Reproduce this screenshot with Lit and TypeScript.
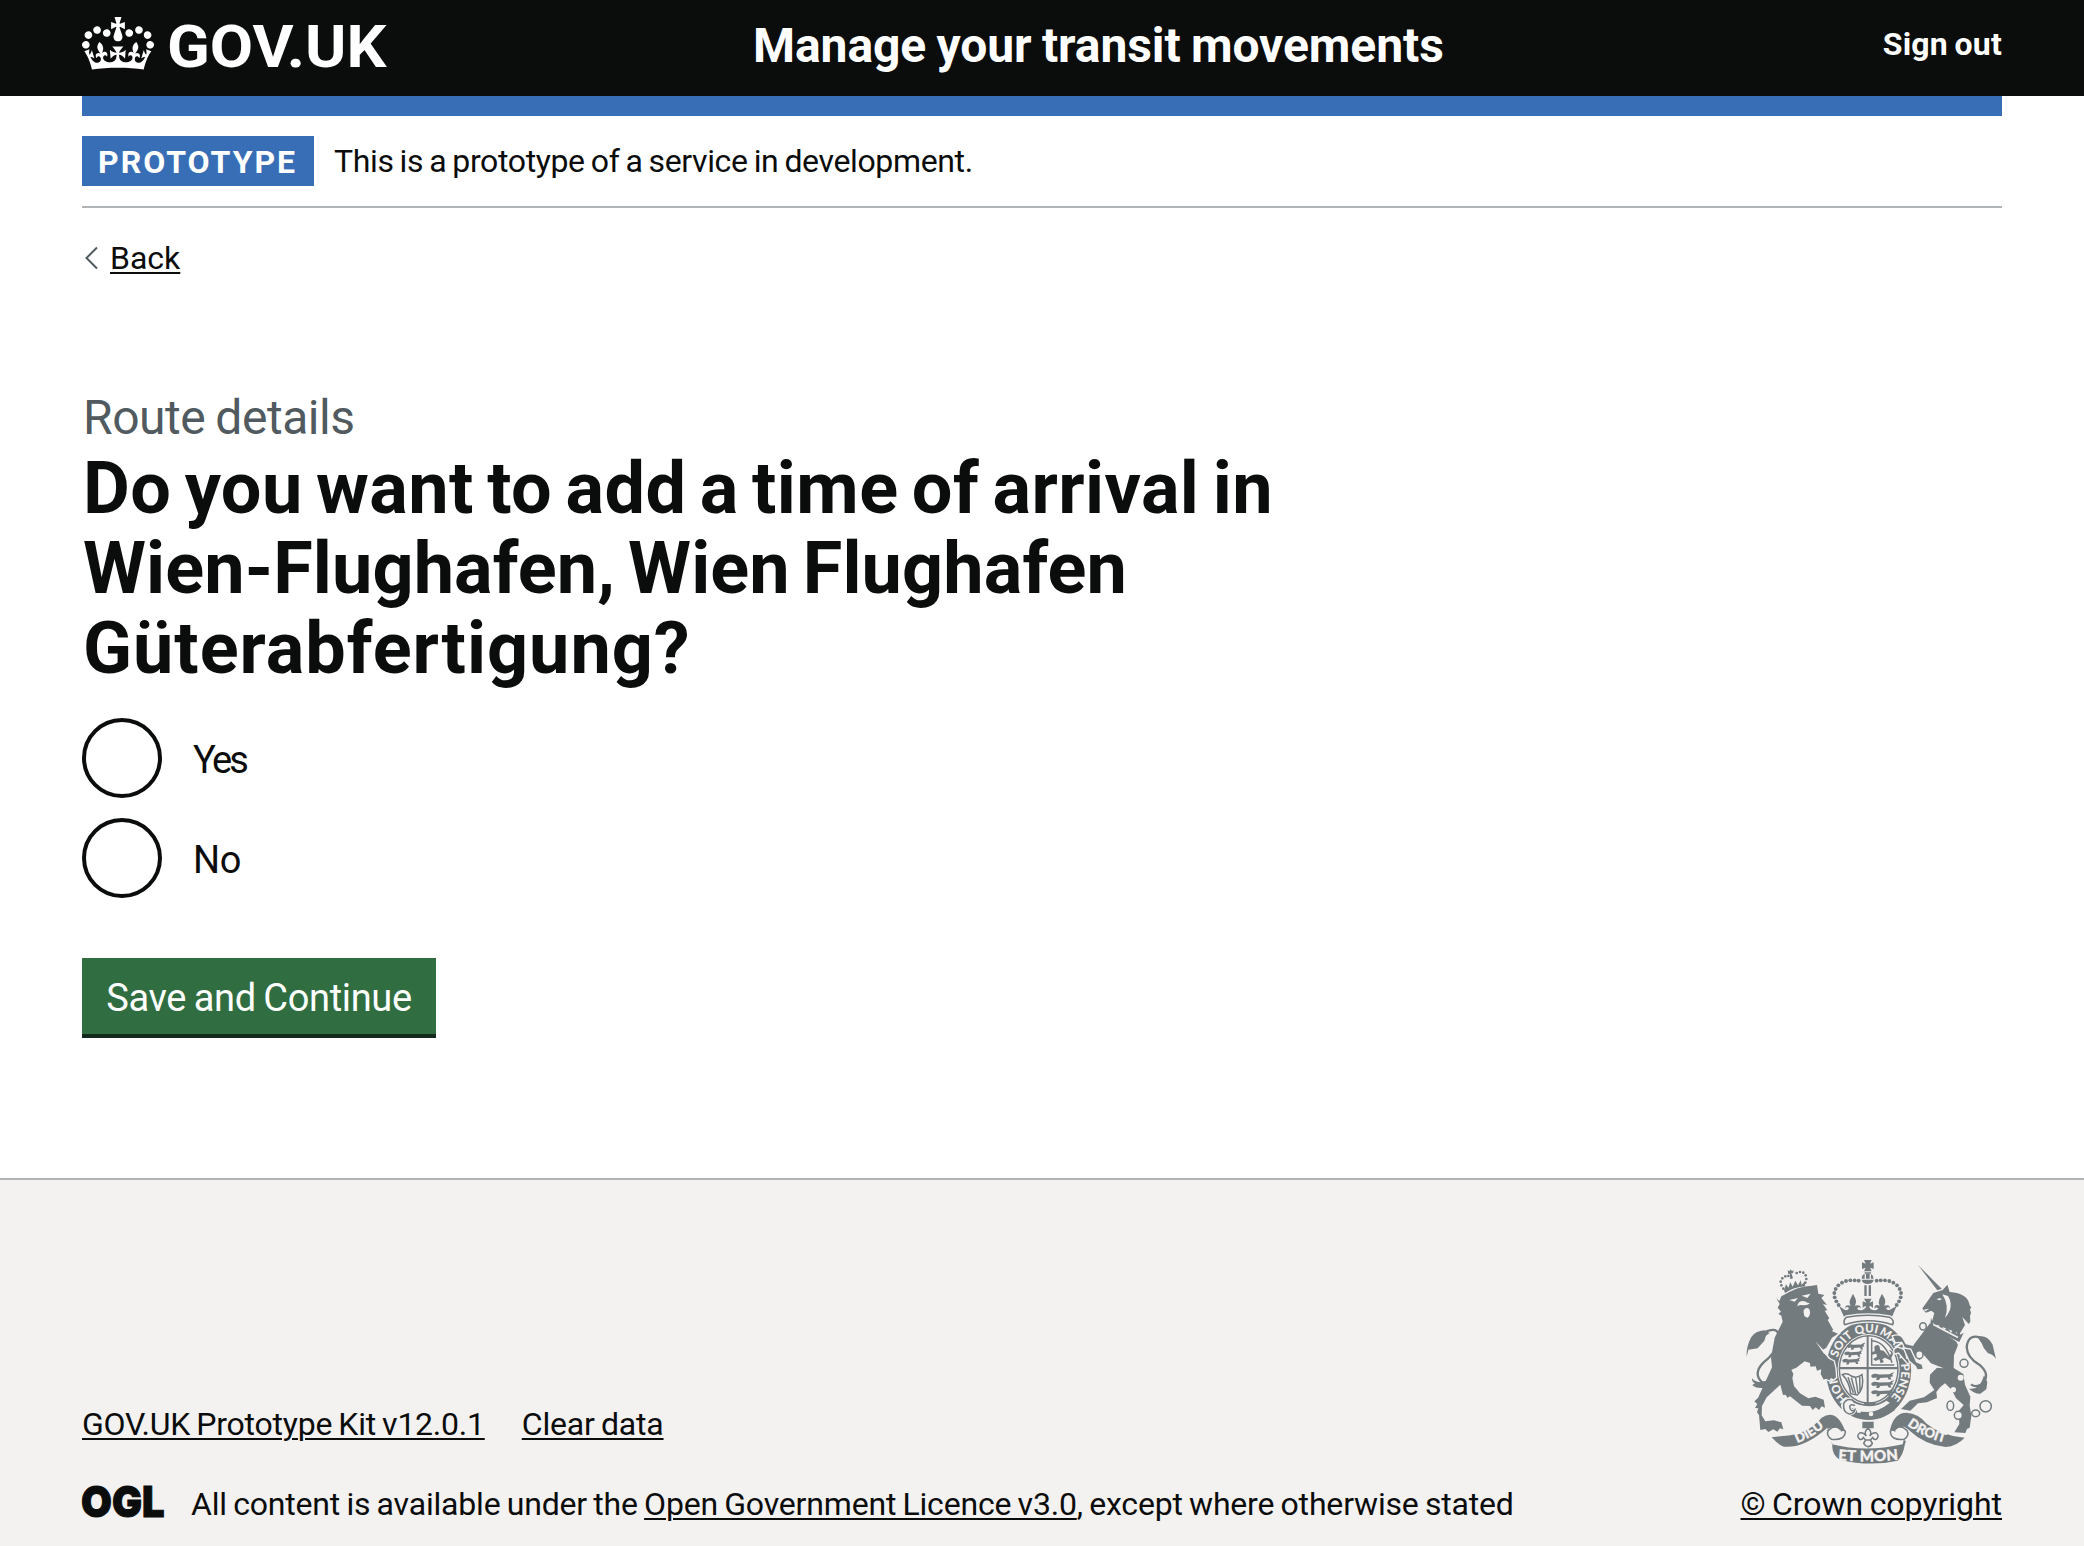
import { LitElement, html, svg, css } from "lit";
import { customElement, state } from "lit/decorators.js";

const CROWN =
  "M25 30.2c3.5 1.5 7.7-.2 9.1-3.7 1.5-3.6-.2-7.8-3.9-9.2-3.6-1.4-7.6.3-9.1 3.9-1.4 3.5.3 7.5 3.9 9zM9 39.5c3.6 1.5 7.8-.2 9.2-3.7 1.5-3.6-.2-7.8-3.9-9.1-3.6-1.5-7.6.2-9.1 3.8-1.4 3.5.3 7.5 3.8 9zM4.4 57.2c3.5 1.5 7.7-.2 9.1-3.8 1.5-3.6-.2-7.7-3.9-9.1-3.5-1.5-7.6.3-9.1 3.8-1.4 3.5.3 7.6 3.9 9.1zm38.3-21.4c3.5 1.5 7.7-.2 9.1-3.8 1.5-3.6-.2-7.7-3.9-9.1-3.6-1.5-7.6.3-9.1 3.8-1.3 3.6.4 7.7 3.9 9.1zm64.4-5.6c-3.6 1.5-7.8-.2-9.1-3.7-1.5-3.6.2-7.8 3.8-9.2 3.6-1.4 7.7.3 9.2 3.9 1.3 3.5-.4 7.5-3.9 9zm15.9 9.3c-3.6 1.5-7.7-.2-9.1-3.7-1.5-3.6.2-7.8 3.7-9.1 3.6-1.5 7.7.2 9.2 3.8 1.5 3.5-.3 7.5-3.8 9zm4.7 17.7c-3.6 1.5-7.8-.2-9.2-3.8-1.5-3.6.2-7.7 3.9-9.1 3.6-1.5 7.7.3 9.2 3.8 1.3 3.5-.4 7.6-3.9 9.1zM89.3 35.8c-3.6 1.5-7.8-.2-9.2-3.8-1.4-3.6.2-7.7 3.9-9.1 3.6-1.5 7.7.3 9.2 3.8 1.4 3.6-.3 7.7-3.9 9.1zM69.7 17.7l8.9 4.7V9.3l-8.9 2.8c-.2-.3-.5-.6-.9-.9L72.4 0H59.6l3.5 11.2c-.3.3-.6.5-.9.9l-8.8-2.8v13.1l8.8-4.7c.3.3.6.7.9.9l-5 15.4v.1c-.2.8-.4 1.6-.4 2.4 0 4.1 3.1 7.5 7 8.1h.2c.3 0 .7.1 1 .1.4 0 .7 0 1-.1h.2c4-.6 7.1-4.1 7.1-8.1 0-.8-.1-1.7-.4-2.4V34l-5.1-15.4c.4-.2.7-.6 1-.9zM66 92.8c16.9 0 32.8 1.1 47.1 3.2 4-16.9 8.9-26.7 14-33.5l-9.6-3.4c1 4.9 1.1 7.2 0 10.2-1.5-1.4-3-4.3-4.2-8.7L108.6 76c2.8-2 5-3.2 7.5-3.3-4.4 9.4-10 11.9-13.6 11.2-4.3-.8-6.3-4.6-5.6-7.9 1-4.7 5.7-5.9 8-.5 4.3-8.7-3-11.4-7.6-8.8 7.1-7.2 7.9-13.5 2.1-21.1-8 6.1-8.1 12.3-4.5 20.8-4.7-5.4-12.1-2.5-9.5 6.2 3.4-5.2 7.9-2 7.2 3.1-.6 4.3-6.4 7.8-13.5 7.2-10.3-.9-10.9-8-11.2-13.8 2.5-.5 7.1 1.8 11 7.3L80.2 60c-4.1 4.4-8 5.3-12.3 5.4 1.4-4.4 8-11.6 8-11.6H55.5s6.4 7.2 7.9 11.6c-4.2-.1-8-1-12.3-5.4l1.4 16.4c3.9-5.5 8.5-7.7 10.9-7.3-.3 5.8-.9 12.8-11.1 13.8-7.2.6-12.9-2.9-13.5-7.2-.7-5 3.8-8.3 7.1-3.1 2.7-8.7-4.6-11.6-9.4-6.2 3.7-8.5 3.6-14.7-4.6-20.8-5.8 7.6-5 13.9 2.2 21.1-4.7-2.6-11.9.1-7.7 8.8 2.3-5.5 7.1-4.2 8.1.5.7 3.3-1.3 7.1-5.7 7.9-3.5.7-9-1.8-13.5-11.2 2.5.1 4.7 1.3 7.5 3.3l-4.7-15.4c-1.2 4.4-2.7 7.2-4.3 8.7-1.1-3-.9-5.3 0-10.2l-9.5 3.4c5 6.9 9.9 16.7 14 33.5 14.8-2.1 30.8-3.2 47.7-3.2z";

// Pearls along the left arch of the royal crown; the right arch mirrors them.
const PEARLS = [[416,122],[404,121],[391,121],[378,123],[366,128],[355,136],[347,147],[343,159],[344,172],[349,184],[356,195]];
const SMALL_PEARLS = [[190,146],[184,136],[182,125],[187,115],[196,109],[205,108],[230,99],[240,96],[250,98],[257,106],[259,117],[256,128]];
const PASSANT = "M0 4c5-4 9-3 13-1l18-1c4-2 5-5 9-4l-4 5 2 4-5 2 2 6h-5l-2-5-13 1-2 5h-5l1-6-7 1-3-4z";

const arms = svg`
  <defs>
    <path id="garter-line" d="M446 501A98 112 0 0 1 446 277A98 112 0 0 1 446 501" />
    <path id="left-line" d="M214 615Q278 596 326 548" />
    <path id="right-line" d="M548 546Q606 594 690 612" />
    <path id="mid-line" d="M350 660Q443 669 540 659" />
  </defs>
  <g class="ink">
    <path d="M432 60h23l-5 11 11-4v20l-11-4 5 11h-23l5-11-11 4V67l11 4z" />
    <path d="M434 97h19v4h-19zM425 116q1-13 9-14v14zM438 102h11v14h-11zM453 102q7 3 8 14h-8zM425 119h36q-3 13-18 13t-18-13z" />
    ${PEARLS.map(([x, y]) => svg`<circle cx=${x} cy=${y} r="5.8" /><circle cx=${886 - x} cy=${y} r="5.8" />`)}
    <path d="M433 136h7v32h-7zM446 136h7v32h-7z" />
    <path d="M357 198l18 12q9 2 12-5-8-8-12 1 0-14 17-9-6-9-1-19l8-17 8 17q4 10-2 19 17-5 18 9-4-8-12-1 4 9 18 4 9-3 10-11-9 1-11 6v-20l11 4-7-12h23l-7 12 11-4v20q-4-6-11-6 0 11 11 12 12 3 16-5-7-6-12 1 0-15 16-9-5-8-1-19l8-17 9 17q3 10-2 19 17-5 17 9-4-8-12-1 4 8 12 4l20-11-17 39q-63-14-138 0z" />
    <ellipse cx="445.500" cy="391" rx="128" ry="149" />
  </g>
  <path class="line halo" d="M379 232q65-13 130 0 15 8 9 22-72-24-144 0-6-13 5-22z" />
  <path class="paper" d="M379 233q65-13 130 0 16 9 10 22-74-27-145 0-7-14 5-22z" />
  <path class="line" d="M379 232q65-13 130 0 15 8 9 22-72-24-144 0-6-13 5-22z" />
  <ellipse class="paper" cx="446" cy="388" rx="93" ry="106" />
  <ellipse class="line" cx="446" cy="388" rx="88" ry="101" />
  <path class="ink" d="M440 288h6v93h88v7h-88v104h-6V388h-83v-7h83z" />
  <g class="ink">
    ${[[382, 311], [374, 333], [368, 355]].map(([x, y]) => svg`<path transform="translate(${x} ${y}) scale(1.35 1.15)" d=${PASSANT} />`)}
    ${[[455, 400], [455, 424], [455, 449]].map(([x, y]) => svg`<path transform="translate(${x} ${y}) scale(1.7 1.25)" d=${PASSANT} />`)}
    <path d="M463 320q7-9 15-2l3 13q10-1 14 6l12 13 7-11-7-9q9 0 12 12l-8 19-16-8-8 5 5 8-10 4-4-12-11 5-8-6 12-7-2-9-12 3-5-7 12-3z" />
    <path d="M432 488h35v7h-35zM427 545h34v20h-34z" />
  </g>
  <path class="line" d="M455 295v80h68M455 302q42 2 61 66M367 404q13-7 27 4 16 9 32-4 8 42-14 61l-20-4q-4-37-25-57zM384 412l16 46M394 413l13 49M407 414l7 45M419 411l1 42" />
  <g class="motto">
    <text><textPath href="#garter-line" startOffset="17.500%">HONI</textPath></text>
    <text><textPath href="#garter-line" startOffset="36.500%">SOIT</textPath></text>
    <text><textPath href="#garter-line" startOffset="49%">QUI</textPath></text>
    <text><textPath href="#garter-line" startOffset="60.500%">MAL</textPath></text>
    <text><textPath href="#garter-line" startOffset="69.500%">Y</textPath></text>
    <text><textPath href="#garter-line" startOffset="80.500%">PENSE</textPath></text>
  </g>
  <path class="paper" d="M385 480q62 36 115 2l10 7q-60 53-130 14z" />
  <path class="ink" d="M380 494q65 46 128-4l17 20q-70 52-148 7z" />
  <g class="paper"><circle cx="417" cy="512" r="7" /><circle cx="453" cy="522" r="7" /></g>
  <path class="gap" d="M394 478q-23-3-26 18 2 22 20 26 14-1 17-13-14 9-16-10 3-9 16-2" />
  <path class="line" d="M400 482q-20-10-29 9-3 27 17 31 14-1 17-13-14 9-16-10 3-9 16-2" />

  <!-- Lion -->
  <path class="outlined" d="M178 183l6-14q54-32 86-31l21-3 4 26 18 4-9 9 17 21-12-3 13 19-8 1 14 23-5 5 17 30-5 3 19 8-18 12-17 30-12 8 19 25 15 8 5 21 2 27-7 6-8-4-5 7-10-5-7 3-9-17 2-14-13 4-4-13-16 1-1-11-16-5-29 22-8 28 5 24 18 22 25 15 21-5 25 9 4 24-10-4-8 11-10-8-9 8-8-12-24-1-36-28-8 4-5-9-8 1-8-31-41 38-14 26-1 28 11 18 26-3 22 6 6 21-10-3-8 10-12-7-15 8-9-9-15 3-4-45-6-8 4-12-10-1 7-12-9-8 11-10 18-40 24-52-3-29 11-60 24-48-4-18-9-6 8-6-10-12 6-11-10-17z" />
  <path class="paper" d="M208 180l26-6-10 11zM245 167l27-6-10 13zM237 187q13-8 25 1l8 2-8 4-9 2-11-1-11 3zM251 211q8-13 17-3 6 16-5 25-14 0-12-22z" />
  <path class="paper" d="M286 304l28 30 17 21-20-15zM214 390q12-9 26-5-14 7-16 24z" />
  <path class="ink" d="M192 151l6-18 7 10 6-16 7 13 8-18 8 14 8-15 3 13 9-9 2 14q-34 2-61 20zM203 91l6 3 2-6 5 5 5-2-2 9-5-1 5 16-8 3-2-17-4 2z" />
  ${SMALL_PEARLS.map(([x, y]) => svg`<circle class="ink" cx=${x} cy=${y} r="4" />`)}
  <path class="line thick" d="M137 275q47-19 39 31-11 35-46 62-33 34-2 60 21 3 34-15" />
  <path class="ink" d="M80 350q-2-30 14-59 12-18 39-20l16 8-11 8-5 15-20 23-28 4zM127 425q-18 5-31-10-1 11 9 15l-8 5q8 10 30 9 27-1 38-29z" />

  <!-- Unicorn -->
  <path class="ink" d="M594 75l77 77-11 9z" />
  <path class="outlined" d="M607 205l9-12 24-34 28-9 14-16 7 22q55 4 60 40l5 7-4 4 3 13-3 7 1 18-5 7-19-21 8 24-16 26-84-33 8-29-9-7-16 6-6-6z" />
  <path class="paper" d="M650 178q9-7 16 0-8 5-16 0zM667 163l17 5q20 32-9 66 14-37-8-71zM611 209l17-3-12 8z" />
  <path class="outlined" d="M630 250l79 55 5 10-12 31-1 38 29 18 5 32 16 36-2 27 5 30-5 36-8 4-5 12-33-2 15-25-2-39 15-18-23-20-13-26-20-19q-18 12-26 26l2 18-30 13-27 3-23 22-28-5 26-25 43-10 31-22-14-22 1-24 21-21 20 2-38-15-26-30-7 20-17-9-19 19-28-33-11 3q-7-14 9-17l19 8 6 26 18-7-23-29-7-16-20 1-8-17q21-8 31 11l7 13 22 5 6-9z" />
  <path class="outlined" d="M553 326l16 36 18 15 6 11 15-2-3-12-17-7-17-38z" />
  <path class="ink" d="M633 233l-3 30 88 43 13-28-10 6-4-12-7 9-9-13-8 10-11-16-10 9-8-17-10 8-8-16-6 8z" />
  <path class="paper" d="M641 251l74 39-2 5-74-39z" />
  <g class="chain">
    <ellipse cx="609" cy="259" rx="10" ry="11" /><ellipse cx="598" cy="344" rx="11" ry="12" />
    <circle cx="732" cy="370" r="12" /><ellipse cx="691" cy="497" rx="10" ry="14" />
    <circle cx="715" cy="526" r="12" /><ellipse cx="767" cy="520" rx="12" ry="10" /><circle cx="797" cy="499" r="17" />
  </g>
  <g class="paper"><circle cx="592" cy="285" r="8" /><circle cx="722" cy="413" r="9" /><circle cx="700" cy="449" r="8" /></g>
  <path class="line thick" d="M789 295q-44-18-49 26 2 33 38 53 37 31 6 60-18 9-31-1" />
  <path class="ink" d="M772 291q28-9 46 23 4 18 10 43-8-13-24-17-15-15-19-30zM792 406l10 20-3 22-18 13q-17 1-34-15 33 5 45-40z" />

  <!-- Ribbon -->
  <path class="outlined" d="M155 592l34-4q71-3 116-55 44-29 70 39l-17 3q-21-24-39-3l13 15 4 26q101 25 212 0l6-26 11-15q-20-20-38 3l-17-5q12-52 49-52 36 2 61 33 44 36 114 42-23 25-57 28-61-5-110-50l-13 45q-5 30-21 46-83 19-174-3-25-16-22-48l-15-48q-69 62-129 57-17-4-38-28z" />
  <path class="paper" d="M318 576q22-27 45-4-3 24-22 25l-11 7-8-15zM570 574q-20-26-44-3 1 26 22 27l11 6 9-14z" />
  <path class="line" d="M376 574q-26-26-51-3-8 15 10 27 40 4 41-24zM511 574q25-26 50-3 9 15-9 27-40 4-41-24z" />
  <path class="line" d="M444 564q-14 13-5 24-9-12-20-9-11 8 0 19 8 2 11-5l7 7h14l7-7q3 7 11 5 11-11 0-19-11-3-20 9 9-11-5-24zM437 600l-6 10q5 9 13 10 9-1 13-10l-6-10" />
  <g class="motto">
    <text class="ribbon"><textPath href="#left-line" startOffset="50%">DIEU</textPath></text>
    <text class="ribbon wide"><textPath href="#mid-line" startOffset="50%">ET MON</textPath></text>
    <text class="ribbon"><textPath href="#right-line" startOffset="50%">DROIT</textPath></text>
  </g>`;

@customElement("app-root")
export class AppRoot extends LitElement {
  @state() private choice = "";

  static styles = css`
    :host { display: block; min-height: 1546px; background: #fff; color: #0b0c0c; font-family: Roboto, "Liberation Sans", sans-serif; font-size: 32px; line-height: 50px; word-spacing: -1.5px; }
    * { box-sizing: border-box; }
    svg { display: block; }
    .header { height: 96px; background: #0b0c0c; color: #fff; }
    .wrap { margin: 0 82px; }
    .bar { display: grid; grid-template-columns: 671px 1fr auto; align-items: start; }
    .logo { display: flex; align-items: flex-start; gap: 14px; padding-top: 17px; }
    .wordmark { overflow: visible; font-weight: 700; font-size: 59px; fill: #fff; }
    .service { padding-top: 16px; font-size: 48px; line-height: 60px; font-weight: 700; letter-spacing: -0.08px; }
    .signout { padding-top: 19px; font-weight: 700; letter-spacing: 0.2px; }
    .stripe { height: 20px; background: #386eb5; }
    .phase { display: flex; align-items: center; gap: 20px; height: 92px; border-bottom: 2px solid #b1b4b6; letter-spacing: -0.37px; }
    .tag { height: 50px; padding: 1px 16px 0; width: 232px; background: #386eb5; color: #fff; font-weight: 700; letter-spacing: 2px; white-space: nowrap; }
    a { color: inherit; text-decoration: underline; text-decoration-thickness: 2px; text-underline-offset: 3px; }
    .plain { text-decoration: none; }
    .back { display: flex; align-items: center; gap: 12px; margin-top: 25px; height: 50px; padding-left: 3px; }
    .caption { display: block; margin-top: 105px; padding-left: 1px; font-size: 48px; line-height: 60px; letter-spacing: -0.45px; color: #505a5f; }
    .title { margin: 0; padding: 1px 0 0 1px; font-size: 72px; line-height: 80px; font-weight: 700; word-spacing: -5px; }
    .row { display: block; white-space: nowrap; }
    .r1 { letter-spacing: 0.44px; } .r2 { letter-spacing: 0.11px; } .r3 { letter-spacing: 0.98px; }
    .radios { display: flex; flex-direction: column; gap: 20px; margin-top: 29px; font-size: 38px; }
    .radio { display: flex; align-items: center; gap: 31px; height: 80px; }
    .disc { width: 80px; height: 80px; border: 4px solid #0b0c0c; border-radius: 50%; display: grid; place-items: center; }
    .disc.on::after { content: ""; width: 40px; height: 40px; border-radius: 50%; background: #0b0c0c; }
    .label { padding-top: 3px; letter-spacing: -0.4px; }
    .tight { letter-spacing: -2.7px; }
    .save { display: block; width: 354px; height: 80px; margin-top: 60px; padding: 3px 0 0; border: 0; border-bottom: 4px solid #12291b; background: #306e41; color: #fff; font: 38px/50px Roboto, sans-serif; letter-spacing: -0.34px; word-spacing: -1.5px; text-align: center; }
    .footer { margin-top: 140px; height: 368px; border-top: 2px solid #b1b4b6; background: #f3f2f1; }
    .foot { display: flex; justify-content: space-between; padding-top: 79px; }
    .meta { padding-top: 140px; }
    .links { display: flex; gap: 37px; }
    .k1 { letter-spacing: -0.24px; } .k2 { letter-spacing: -0.18px; }
    .licence { display: flex; align-items: flex-start; gap: 27px; margin-top: 30px; letter-spacing: -0.18px; white-space: nowrap; }
    .ogl { margin-top: 5px; overflow: visible; font-family: Inter, sans-serif; font-weight: 900; font-size: 43px; fill: #0b0c0c; stroke: #0b0c0c; stroke-width: 1; letter-spacing: 0; }
    .crown-right { display: flex; flex-direction: column; align-items: center; }
    .arms { overflow: visible; }
    .copy { margin-top: 14px; letter-spacing: -0.03px; white-space: nowrap; }
    .ink { fill: #737b7f; }
    .paper { fill: #f3f2f1; }
    .outlined { fill: #737b7f; stroke: #f3f2f1; stroke-width: 8; paint-order: stroke; }
    .line { fill: none; stroke: #737b7f; stroke-width: 4.5; }
    .halo { stroke: #f3f2f1; stroke-width: 12; }
    .gap { fill: #f3f2f1; stroke: #f3f2f1; stroke-width: 10; }
    .thick { stroke-width: 7; }
    .chain { fill: #f3f2f1; stroke: #737b7f; stroke-width: 4.5; }
    .motto { fill: #f3f2f1; font-family: Lato, sans-serif; font-weight: 900; font-size: 35px; text-anchor: middle; word-spacing: 0; letter-spacing: 0; }
    .ribbon { font-size: 40px; stroke: #f3f2f1; stroke-width: 1; }
    .wide { font-size: 45px; letter-spacing: 1px; }
  `;

  private radio(label: string, tight = false) {
    return html`<div class="radio" role="radio" aria-checked=${this.choice === label} @click=${() => (this.choice = label)}>
      <span class="disc ${this.choice === label ? "on" : ""}"></span><span class="label ${tight ? "tight" : ""}">${label}</span>
    </div>`;
  }

  render() {
    return html`
      <header class="header">
        <div class="wrap bar">
          <div class="logo">
            <svg width="72" height="53" viewBox="0 0 132 97"><path fill="#fff" d=${CROWN} /></svg>
            <svg class="wordmark" width="220" height="54"><text x="-1" y="50" textLength="219.500" lengthAdjust="spacingAndGlyphs">GOV.UK</text></svg>
          </div>
          <div class="service">Manage your transit movements</div>
          <a class="signout plain">Sign out</a>
        </div>
      </header>
      <div class="wrap">
        <div class="stripe"></div>
        <div class="phase"><strong class="tag">PROTOTYPE</strong><span>This is a prototype of a service in development.</span></div>
        <div class="back">
          <svg width="13" height="24" viewBox="0 0 13 24"><path d="M12 1.500 1.500 12 12 22.500" fill="none" stroke="#505a5f" stroke-width="2" /></svg>
          <a>Back</a>
        </div>
        <main>
          <span class="caption">Route details</span>
          <h1 class="title">
            <span class="row r1">Do you want to add a time of arrival in</span>
            <span class="row r2">Wien-Flughafen, Wien Flughafen</span>
            <span class="row r3">Güterabfertigung?</span>
          </h1>
          <div class="radios">${this.radio("Yes", true)}${this.radio("No")}</div>
          <button class="save">Save and Continue</button>
        </main>
      </div>
      <footer class="footer">
        <div class="wrap foot">
          <div class="meta">
            <div class="links"><a class="k1">GOV.UK Prototype Kit v12.0.1</a><a class="k2">Clear data</a></div>
            <div class="licence">
              <svg class="ogl" width="82" height="34"><text x="-1" y="33" textLength="83.500" lengthAdjust="spacingAndGlyphs">OGL</text></svg>
              <span>All content is available under the <a>Open Government Licence v3.0</a>, except where otherwise stated</span>
            </div>
          </div>
          <div class="crown-right">
            <svg class="arms" width="250" height="206" viewBox="78 57 750 618">${arms}</svg>
            <a class="copy">© Crown copyright</a>
          </div>
        </div>
      </footer>
    `;
  }
}
